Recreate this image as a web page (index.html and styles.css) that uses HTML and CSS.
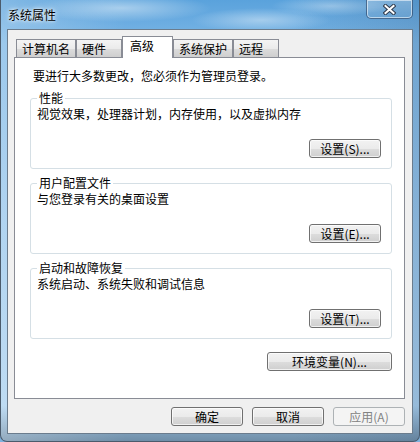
FILE: index.html
```html
<!DOCTYPE html>
<html lang="zh-CN">
<head>
    <meta charset="UTF-8">
    <meta name="viewport" content="width=device-width, initial-scale=1.0">
    <title>系统属性</title>
    <link rel="stylesheet" href="styles.css">
</head>
<body>

<div class="window">
    <!-- Title bar -->
    <div class="titlebar">
        <span class="title">系统属性</span>
        <button class="close-btn" aria-label="关闭">
            <svg width="13" height="11" viewBox="0 0 13 11">
                <path d="M2.5 2 L10.5 9 M10.5 2 L2.5 9" stroke="#2f3b4d" stroke-width="4" stroke-linecap="square"/>
                <path d="M2.5 2 L10.5 9 M10.5 2 L2.5 9" stroke="#ffffff" stroke-width="2" stroke-linecap="square"/>
            </svg>
        </button>
    </div>

    <div class="client">
        <!-- Tabs -->
        <div class="tabs">
            <div class="tab">计算机名</div>
            <div class="tab">硬件</div>
            <div class="tab active">高级</div>
            <div class="tab">系统保护</div>
            <div class="tab">远程</div>
        </div>

        <!-- Tab page -->
        <div class="panel">
            <p class="note">要进行大多数更改，您必须作为管理员登录。</p>

            <fieldset class="group">
                <legend>性能</legend>
                <p class="group-text">视觉效果，处理器计划，内存使用，以及虚拟内存</p>
                <div class="row-right"><button class="btn">设置(S)...</button></div>
            </fieldset>

            <fieldset class="group">
                <legend>用户配置文件</legend>
                <p class="group-text">与您登录有关的桌面设置</p>
                <div class="row-right"><button class="btn">设置(E)...</button></div>
            </fieldset>

            <fieldset class="group">
                <legend>启动和故障恢复</legend>
                <p class="group-text">系统启动、系统失败和调试信息</p>
                <div class="row-right"><button class="btn">设置(T)...</button></div>
            </fieldset>

            <div class="row-right env-row"><button class="btn btn-wide">环境变量(N)...</button></div>
        </div>

        <!-- Dialog buttons -->
        <div class="dialog-buttons">
            <button class="btn">确定</button>
            <button class="btn">取消</button>
            <button class="btn" disabled>应用(A)</button>
        </div>
    </div>
</div>

</body>
</html>
```

FILE: styles.css
```css
* {
    box-sizing: border-box;
}
body {
    margin: 0;
    padding: 0;
    font-family: "Noto Sans CJK SC", "DejaVu Sans", sans-serif;
    font-size: 12px;
    color: #000;
    background-color: #7fb2de;
}
.window {
    width: 420px;
    height: 442px;
    display: flex;
    flex-direction: column;
    padding: 0 6px 7px 6px;
    border: 1px solid #4b5b6c;
    border-top: none;
    border-radius: 0 0 7px 7px;
    background:
        radial-gradient(ellipse 90px 14px at 120px 8px, rgba(255,255,255,0.45), transparent),
        radial-gradient(ellipse 70px 12px at 260px 20px, rgba(255,255,255,0.4), transparent),
        radial-gradient(ellipse 60px 10px at 330px 6px, rgba(255,255,255,0.35), transparent),
        linear-gradient(90deg, rgba(255,255,255,0.25), transparent 30%, transparent 70%, rgba(40,60,90,0.15)),
        linear-gradient(180deg, #5aa2dc 0%, #7cb7e6 10%, #97c6ec 50%, #a9d0ef 92%, #6f8ea8 100%);
}
.titlebar {
    height: 29px;
    display: flex;
    justify-content: space-between;
    align-items: flex-start;
    flex-shrink: 0;
}
.title {
    padding: 8px 0 0 1px;
    line-height: 14px;
    text-shadow: 0 0 6px #fff, 0 0 3px #fff;
}
.close-btn {
    width: 47px;
    height: 19px;
    padding: 0;
    display: flex;
    align-items: center;
    justify-content: center;
    border: 1px solid rgba(30, 55, 90, 0.6);
    border-top: none;
    border-radius: 0 0 5px 5px;
    box-shadow: inset 0 0 0 1px rgba(255, 255, 255, 0.55);
    background: linear-gradient(180deg, rgba(255,255,255,0.25), rgba(255,255,255,0.05));
}
.client {
    flex: 1;
    display: flex;
    flex-direction: column;
    padding: 6px 7px 7px 6px;
    background-color: #f0f0f0;
    border: 1px solid #6b7c8d;
}

/* Tabs */
.tabs {
    display: flex;
    align-items: flex-end;
    padding-left: 2px;
    height: 21px;
    flex-shrink: 0;
    position: relative;
    z-index: 1;
}
.tab {
    height: 18px;
    min-width: 46px;
    padding: 0 5px;
    line-height: 17px;
    border: 1px solid #898c95;
    border-bottom: none;
    background: linear-gradient(180deg, #f4f4f4 0%, #ebebeb 50%, #dcdcdc 51%, #cfcfcf 100%);
}
.tab.active {
    height: 22px;
    min-width: 51px;
    padding: 0 7px;
    margin-bottom: -1px;
    line-height: 18px;
    background: #fff;
}

/* Tab page */
.panel {
    flex: 1;
    display: flex;
    flex-direction: column;
    padding: 10px 12px 0 15px;
    background-color: #fff;
    border: 1px solid #898c95;
}
.note {
    margin: 0 0 8px 3px;
    line-height: 15px;
}
.group {
    margin: 0;
    min-width: 0;
    padding: 1px 10px 10px 6px;
    border: 1px solid #d5dfe5;
    border-radius: 3px;
}
.group + .group {
    margin-top: 7px;
}
.group legend {
    padding: 0 2px;
    line-height: 14px;
}
.group-text {
    margin: 0;
    line-height: 15px;
}
.row-right {
    display: flex;
    justify-content: flex-end;
    margin-top: 18px;
}
.env-row {
    margin-top: 13px;
}

/* Buttons */
.btn {
    width: 72px;
    height: 19px;
    padding: 0;
    font-family: inherit;
    font-size: 12px;
    line-height: 16px;
    color: #000;
    border: 1px solid #707070;
    border-radius: 3px;
    box-shadow: inset 0 0 0 1px rgba(255, 255, 255, 0.7);
    background: linear-gradient(180deg, #f2f2f2 0%, #ebebeb 50%, #dddddd 51%, #cfcfcf 100%);
}
.btn-wide {
    width: 125px;
}
.btn:disabled {
    color: #838383;
    border-color: #adb2b5;
    background: #f4f4f4;
    box-shadow: none;
}
.dialog-buttons {
    display: flex;
    justify-content: flex-end;
    gap: 9px;
    margin-top: 8px;
    flex-shrink: 0;
}
```
